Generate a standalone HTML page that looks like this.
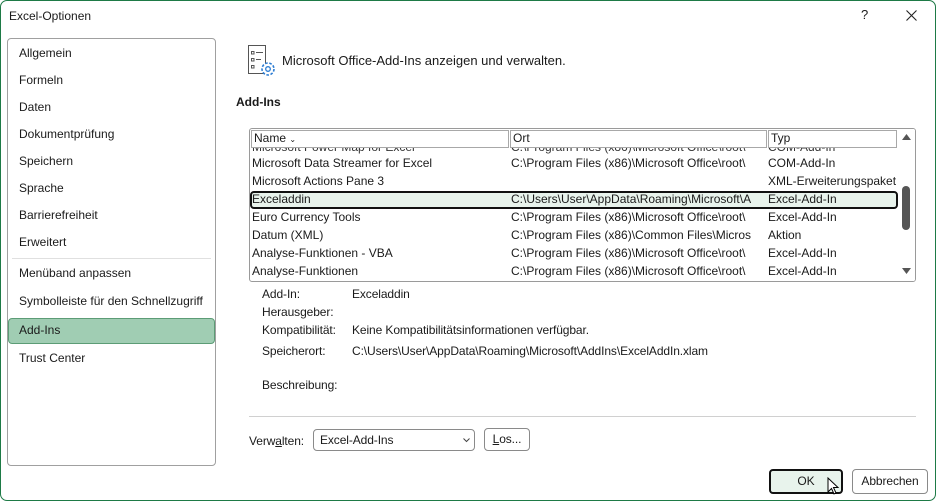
<!DOCTYPE html>
<html><head><meta charset="utf-8"><style>
*{box-sizing:border-box;margin:0;padding:0}
body{width:936px;height:501px;background:#fff;font-family:"Liberation Sans",sans-serif;font-size:12px;color:#1a1a1a;position:relative;overflow:hidden}
.frame{position:absolute;left:0;top:0;width:936px;height:501px;border:1px solid #1e7a46;border-radius:7px}
.a{position:absolute;white-space:nowrap}
.nav{position:absolute;left:7px;top:38px;width:209px;height:428px;border:1px solid #a0a0a0;border-radius:4px}
.nav .a{left:11px}
.sel{position:absolute;left:0;top:279px;width:207px;height:26px;background:#a0cdb3;border:1px solid #5c9c76;border-radius:4px}
.list{position:absolute;left:249px;top:128px;width:667px;height:154px;border:1px solid #9a9a9a;border-radius:3px;overflow:hidden}
.hd{position:absolute;top:1px;height:18px;border:1px solid #a8a8a8;background:#fff;padding-left:2px;line-height:15px}
.row{position:absolute;left:0;width:648px;height:18px;line-height:17px}
.row span{position:absolute}
.d{font-size:12px;letter-spacing:-0.1px}
.btn{position:absolute;border:1px solid #8a8a8a;border-radius:4px;text-align:center;background:#fff;font-size:12px}
</style></head><body>
<div class="frame"></div>
<div class="a" style="left:9px;top:9px">Excel-Optionen</div>
<div class="a" style="left:861px;top:7px;font-size:13px">?</div>
<svg class="a" style="left:906px;top:10px" width="11" height="11"><path d="M0.5 0.5L10.5 10.5M10.5 0.5L0.5 10.5" stroke="#222" stroke-width="1.1"/></svg>

<div class="nav">
<div class="sel"></div>
<div class="a" style="top:7px">Allgemein</div>
<div class="a" style="top:34px">Formeln</div>
<div class="a" style="top:61px">Daten</div>
<div class="a" style="top:88px">Dokumentprüfung</div>
<div class="a" style="top:115px">Speichern</div>
<div class="a" style="top:142px">Sprache</div>
<div class="a" style="top:169px">Barrierefreiheit</div>
<div class="a" style="top:196px">Erweitert</div>
<div class="a" style="left:4px;top:219px;width:199px;height:1px;background:#e0e0e0"></div>
<div class="a" style="top:227px">Menüband anpassen</div>
<div class="a" style="top:255px">Symbolleiste für den Schnellzugriff</div>
<div class="a" style="top:284px">Add-Ins</div>
<div class="a" style="top:312px">Trust Center</div>
</div>

<svg class="a" style="left:247px;top:44px" width="30" height="34" viewBox="0 0 30 34">
<rect x="1.5" y="1.5" width="17" height="28" fill="none" stroke="#555"/>
<rect x="4.5" y="7.5" width="2.5" height="2.5" fill="none" stroke="#555"/><line x1="9" y1="8.5" x2="16" y2="8.5" stroke="#555"/>
<rect x="4.5" y="14.5" width="2.5" height="2.5" fill="none" stroke="#555"/><line x1="9" y1="15.5" x2="14" y2="15.5" stroke="#555"/>
<rect x="4.5" y="21.5" width="2.5" height="2.5" fill="none" stroke="#555"/>
<circle cx="21" cy="25" r="6" fill="#fff" stroke="#2b7cd3" stroke-width="1.6" stroke-dasharray="2.6 1.6"/>
<circle cx="21" cy="25" r="2.3" fill="none" stroke="#2b7cd3" stroke-width="1.3"/>
</svg>
<div class="a" style="left:282px;top:53px;font-size:13px">Microsoft Office-Add-Ins anzeigen und verwalten.</div>
<div class="a" style="left:236px;top:95px;font-weight:bold">Add-Ins</div>

<div class="list">
<div class="row" style="top:10px;color:#333"><span style="left:2px">Microsoft Power Map for Excel</span><span style="left:261px">C:\Program Files (x86)\Microsoft Office\root\</span><span style="left:518px">COM-Add-In</span></div>
<div class="row" style="top:26px"><span style="left:2px">Microsoft Data Streamer for Excel</span><span style="left:261px">C:\Program Files (x86)\Microsoft Office\root\</span><span style="left:518px">COM-Add-In</span></div>
<div class="row" style="top:44px"><span style="left:2px">Microsoft Actions Pane 3</span><span style="left:518px">XML-Erweiterungspaket</span></div>
<div class="row" style="top:62px;background:#e8f3ec;border:2px solid #111;border-radius:4px;left:0;width:648px"><span style="left:0px;top:-2px">Exceladdin</span><span style="left:259px;top:-2px">C:\Users\User\AppData\Roaming\Microsoft\A</span><span style="left:516px;top:-2px">Excel-Add-In</span></div>
<div class="row" style="top:80px"><span style="left:2px">Euro Currency Tools</span><span style="left:261px">C:\Program Files (x86)\Microsoft Office\root\</span><span style="left:518px">Excel-Add-In</span></div>
<div class="row" style="top:98px"><span style="left:2px">Datum (XML)</span><span style="left:261px">C:\Program Files (x86)\Common Files\Micros</span><span style="left:518px">Aktion</span></div>
<div class="row" style="top:116px"><span style="left:2px">Analyse-Funktionen - VBA</span><span style="left:261px">C:\Program Files (x86)\Microsoft Office\root\</span><span style="left:518px">Excel-Add-In</span></div>
<div class="row" style="top:134px"><span style="left:2px">Analyse-Funktionen</span><span style="left:261px">C:\Program Files (x86)\Microsoft Office\root\</span><span style="left:518px">Excel-Add-In</span></div>
<div class="hd" style="left:1px;width:258px">Name <span style="font-size:8px">&#8964;</span></div>
<div class="hd" style="left:260px;width:257px">Ort</div>
<div class="hd" style="left:518px;width:129px">Typ</div>
<div class="a" style="left:648px;top:0;width:17px;height:152px;background:#fff"></div>
<svg class="a" style="left:652px;top:5px" width="9" height="6"><path d="M0 6L4.5 0L9 6Z" fill="#555"/></svg>
<svg class="a" style="left:652px;top:139px" width="9" height="6"><path d="M0 0L4.5 6L9 0Z" fill="#555"/></svg>
<div class="a" style="left:652px;top:57px;width:8px;height:44px;background:#555;border-radius:4px"></div>
</div>

<div class="d">
<div class="a" style="left:262px;top:287px">Add-In:</div><div class="a" style="left:352px;top:287px">Exceladdin</div>
<div class="a" style="left:262px;top:305px">Herausgeber:</div>
<div class="a" style="left:262px;top:323px">Kompatibilität:</div><div class="a" style="left:352px;top:323px">Keine Kompatibilitätsinformationen verfügbar.</div>
<div class="a" style="left:262px;top:344px">Speicherort:</div><div class="a" style="left:352px;top:344px">C:\Users\User\AppData\Roaming\Microsoft\AddIns\ExcelAddIn.xlam</div>
<div class="a" style="left:262px;top:378px">Beschreibung:</div>
</div>
<div class="a" style="left:249px;top:416px;width:667px;height:1px;background:#d0d0d0"></div>

<div class="a d" style="left:249px;top:434px">Verw<u>a</u>lten:</div>
<div class="btn d" style="left:313px;top:429px;width:162px;height:22px;text-align:left;padding:3px 6px">Excel-Add-Ins<svg class="a" style="left:149px;top:8px" width="7" height="5"><path d="M0.5 0.5L3.5 3.5L6.5 0.5" fill="none" stroke="#444"/></svg></div>
<div class="btn d" style="left:484px;top:428px;width:46px;height:23px;line-height:21px"><u>L</u>os...</div>

<div class="btn d" style="left:769px;top:469px;width:74px;height:25px;line-height:21px;background:#e8f3ec;border:2px solid #111">OK</div>
<svg class="a" style="left:827px;top:477px" width="14" height="20"><path d="M1 1L1 15L4.5 11.5L7 17L9 16L6.5 10.5L11 10.5Z" fill="#fff" stroke="#000" stroke-width="1"/></svg>
<div class="btn d" style="left:852px;top:469px;width:76px;height:25px;line-height:23px">Abbrechen</div>
</body></html>
